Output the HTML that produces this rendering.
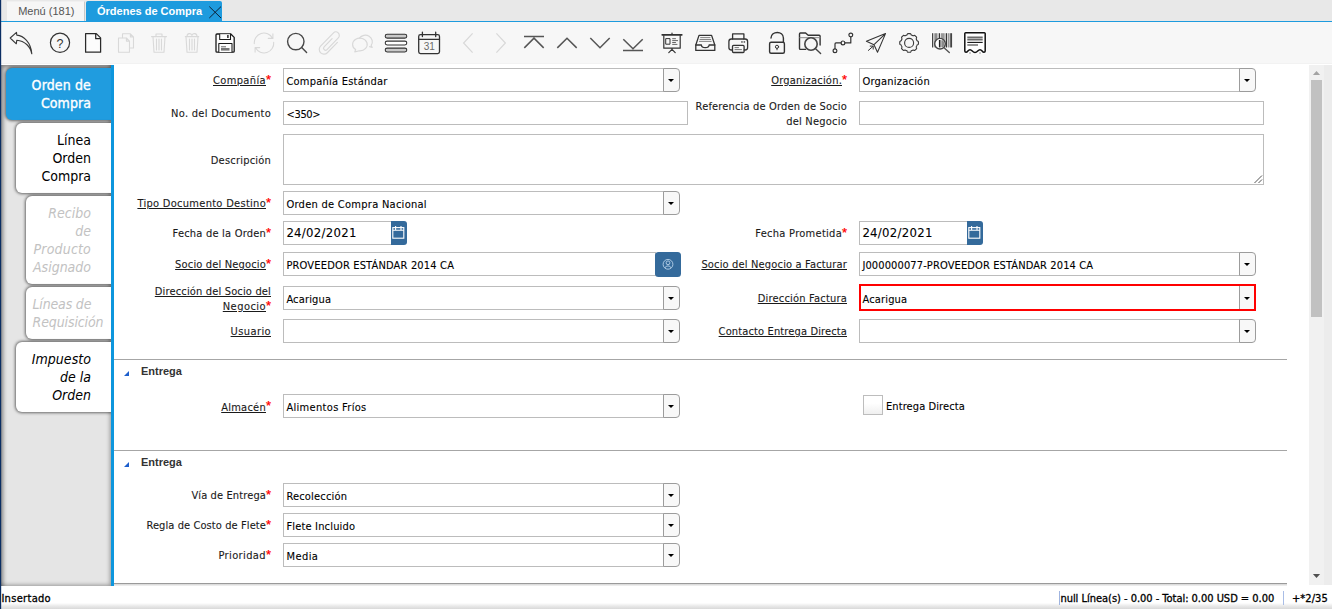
<!DOCTYPE html>
<html lang="es"><head><meta charset="utf-8"><title>Órdenes de Compra</title>
<style>
html,body{margin:0;padding:0}
body{width:1332px;height:609px;overflow:hidden;position:relative;background:#fff;font-family:"DejaVu Sans Condensed","Liberation Sans",sans-serif;font-size:11px;color:#000;-webkit-text-stroke:.1px currentColor}
div,span,i{box-sizing:border-box}
.abs,.lb,.inp,.cbtn,.dbtn,.tab,.hl{position:absolute}
#topbar{position:absolute;left:0;top:0;width:1332px;height:21px;background:#e8e8e8}
#topline{position:absolute;left:1px;top:21px;width:1331px;height:1px;background:#1e9bde}
#navy{position:absolute;left:0;top:0;width:1px;height:609px;background:#0b2e63;z-index:9}
#navy2{position:absolute;left:1px;top:0;width:1px;height:609px;background:rgba(11,46,99,.18);z-index:9}
#tab1{position:absolute;left:7px;top:1px;width:78px;height:20px;background:#f6f6f6;border-right:1px solid #c9c9c9;border-top:1px solid #f0f0f0;font:11px "Liberation Sans",sans-serif;color:#555;line-height:19px;padding-left:11.2px;white-space:nowrap}
#tab2{position:absolute;left:86px;top:1px;width:136px;height:20px;background:#1e9bde;border-radius:2px 2px 0 0;font:bold 11px "Liberation Sans",sans-serif;color:#fff;line-height:20px;padding-left:11px;white-space:nowrap}
#toolbar{position:absolute;left:0;top:22px;width:1332px;height:42px;background:#f7f7f7;border-bottom:1px solid #f2f2f2}
#icons{position:absolute;left:0;top:0;z-index:5}
#side{position:absolute;left:1px;top:65px;width:110px;height:521px;background:#e5e5e5;box-shadow:inset 4px 4px 4px -2px rgba(0,0,0,.45),inset -3px -3px 4px -2px rgba(0,0,0,.35);overflow:hidden}
#bluebar{position:absolute;left:111px;top:65px;width:3px;height:521px;background:#0d96dd}
.tab{right:0;background:#fff;border-radius:6px 0 0 6px;box-shadow:0 0 3px 1px rgba(0,0,0,.55);font-size:14px;line-height:18px;text-align:right;padding:8px 20px 8px 0;white-space:nowrap;color:#000;-webkit-text-stroke:0}
.tab.sel{background:#209cdf;color:#fff;-webkit-text-stroke:.35px #fff}
.tab.dis{color:#c2c2c2;font-style:italic}
.tab.la{text-align:left;padding-left:6.5px}
.tab.it{font-style:italic}
.lb{line-height:15px;text-align:right;white-space:nowrap;color:#1a1a1a}
.u{text-decoration:underline;text-underline-offset:0.9px;text-decoration-thickness:1px}
.ast{color:#f00;font-weight:normal;-webkit-text-stroke:.25px #f00;font-family:"Liberation Sans",sans-serif;font-size:13px;line-height:0;position:relative;top:-0.5px;display:inline-block;width:5px;text-align:center;text-decoration:none}
.inp{height:24px;border:1px solid #bcbcbc;background:#fff;line-height:22px;padding:2px 0 0 2.4px;white-space:nowrap;overflow:hidden}
.inp.date{font-size:13px;padding-top:0}
.inp.red{border:2px solid #f00;border-right:none;line-height:23px;padding:2px 0 0 1.4px}
.cbtn{width:17px;height:24px;border:1px solid #9c9c9c;border-radius:0 4px 4px 0;background:#f8f8f8}
.cbtn.redb{border:2px solid #f00;border-left:none;border-radius:0;box-shadow:inset 1px 0 0 #9c9c9c}
.cbtn i{position:absolute;left:3.7px;top:10px;width:0;height:0;border-left:3.3px solid transparent;border-right:3.3px solid transparent;border-top:3.4px solid #000}
.cbtn.redb i{top:11px;left:4.7px}
.dbtn{width:16px;height:24px;background:#346a9b;border-radius:0 3px 3px 0}
.hl{left:114px;width:1173px;height:1px;background:#a6a6a6}
.sec,#tab1,#tab2{-webkit-text-stroke:0}
.sec{position:absolute;left:141px;font:bold 11px "Liberation Sans",sans-serif;color:#333;line-height:14px;white-space:nowrap}
.tri{position:absolute;left:124px;width:0;height:0;border-left:5.5px solid transparent;border-bottom:5.5px solid #1d5fcc}
#status{position:absolute;left:1px;top:586px;width:1331px;height:23px;background:linear-gradient(#fff 0,#fff 17px,#e9e9e9 20px,#d9d9d9 23px);font-size:11px;-webkit-text-stroke:.3px #000;white-space:nowrap}
#status span{position:absolute;top:2.5px;line-height:15px}
#sb{position:absolute;left:1309px;top:65px;width:15px;height:520px;background:#f1f1f1}
#sb2{position:absolute;left:1324px;top:65px;width:8px;height:520px;background:#ececec}
#thumb{position:absolute;left:1311px;top:80px;width:11px;height:237px;background:#c1c1c1}
</style></head><body>
<div id="navy"></div><div id="navy2"></div>
<div id="topbar"></div>
<div id="tab1">Menú (181)</div>
<div id="tab2">Órdenes de Compra</div>
<div id="topline"></div>
<div id="toolbar"></div>

<svg id="icons" width="1332" height="64" viewBox="0 0 1332 64" fill="none" stroke-linecap="round" stroke-linejoin="round" font-family="Liberation Sans, sans-serif">
<path d="M209.3 6.6L221 18M221 6.6L209.3 18" stroke="#0c2238" stroke-width="1" stroke-linecap="butt"/>
<path d="M10.2 38L16.5 32.4L16.8 35.1C23.5 35.7 31 42.3 31.8 53.8C30.5 46.5 24.7 40.8 16.8 40.2L16.3 43.8Z" stroke="#383838" stroke-width="1.1"/>
<circle cx="60" cy="42.8" r="9.6" stroke="#333" stroke-width="1.2"/><text x="60" y="47.7" font-size="12.5" text-anchor="middle" fill="#333" stroke="none">?</text>
<path d="M85.6 33.6H96.3L100.6 37.9V52.2H85.6ZM95.7 33.8V38.7H100.4" stroke="#2a2a2a" stroke-width="1.25" fill="#fcfcfc"/>
<g stroke="#d9d9d9" stroke-width="1.1"><path d="M122.5 37.6V33.8H130.4L133.5 36.9V48H130M130.4 33.8V36.9H133.5"/><path d="M118.5 38H126.4L129.5 41.1V52.2H118.5ZM126.4 38V41.1H129.5"/></g>
<g stroke="#d9d9d9" stroke-width="1.1"><path d="M151.5 36.6H166.5M156 36.4V34H162V36.4M153 36.8L154 52.2H164L165 36.8M156.5 39V50M159 39V50M161.5 39V50"/></g>
<g stroke="#d9d9d9" stroke-width="1.1"><path d="M185.3 36.6H198.7M187 36.4C187 33 191 32.8 191.9 35.4C192.9 32.8 197 33 197 36.4M186 36.8L187 52.2H197L198 36.8M189.5 39V50M192 39V50M194.5 39V50"/></g>
<g stroke="#1a1a1a" stroke-width="1.3" fill="#fdfdfd"><path d="M217 34H230.8L234.2 37.4V51.2Q234.2 52.2 233.2 52.2H217Q216 52.2 216 51.2V35Q216 34 217 34Z"/><path d="M219.7 34.2V39.4H230.5V34.2" stroke-width="1.05"/><path d="M218.8 52V43.5H232V52" stroke-width="1.05"/></g><rect x="227.2" y="35" width="1.4" height="3" fill="#1a1a1a"/><rect x="221" y="46.3" width="5" height="1" fill="#666"/><rect x="221" y="48" width="8.5" height="2.6" fill="#777"/>
<g stroke="#d8d8d8" stroke-width="1.1"><path d="M254.3 43.8A9.7 9.7 0 0 1 272.5 38.2M272.9 33.9V38.4H268.3"/><path d="M273.7 42.2A9.7 9.7 0 0 1 255.5 47.8M255.1 52.1V47.6H259.7"/></g>
<g stroke="#484848" stroke-width="1.4"><circle cx="295.8" cy="41.6" r="8.2"/><path d="M301.7 47.5L306.6 52.5"/></g>
<g stroke="#d8d8d8" stroke-width="1.15" transform="translate(330.2 43) rotate(44)"><path d="M4.7 -5.5V9A4.7 4.7 0 0 1 -4.7 9V-9.3A3.5 3.5 0 0 1 2.3 -9.3V7A2 2 0 0 1 -1.7 7V-4.5"/></g>
<g stroke="#d8d8d8" stroke-width="1.15"><path d="M359.4 38.2A6.9 6.5 0 1 1 371.2 45.4L372.2 47.4L369.6 46.6"/><path d="M355.6 49.6A7.3 6.3 0 1 1 359.5 50.8L354.8 51.9Z"/></g>
<g stroke="#333" stroke-width="1.05"><rect x="385.2" y="34.2" width="21.6" height="3.9" rx="1.95" fill="#c9c9c9"/><rect x="385.2" y="41.1" width="21.6" height="3.9" rx="1.95" fill="#fff"/><rect x="385.2" y="48.1" width="21.6" height="3.9" rx="1.95" fill="#c9c9c9"/></g>
<g stroke="#333" stroke-width="1.3"><rect x="418.7" y="34.6" width="20.8" height="19" rx="1.8"/><path d="M418.7 39.3H439.5M422.4 32.2V36.6M435.7 32.2V36.6"/></g><text x="429.2" y="50.4" font-size="10" text-anchor="middle" fill="#6a6a6a" stroke="none">31</text>
<g stroke="#d8d8d8" stroke-width="1.2" stroke-linecap="butt" stroke-linejoin="miter"><path d="M472.6 33.3L463.6 43L472.6 52.7"/><path d="M496.4 33.3L505.4 43L496.4 52.7"/></g>
<g stroke="#555" stroke-width="1.5" stroke-linecap="butt" stroke-linejoin="miter"><path d="M524 36.4H544M524.3 47.9L534 38.1L543.7 47.9"/><path d="M557.3 47.9L567 38.2L576.7 47.9"/><path d="M590.3 38L600 47.7L609.7 38"/><path d="M623.3 39.2L633 48.8L642.7 39.2M623 50.4H643"/></g>
<g stroke="#333"><path d="M662.2 34.8H681.8" stroke-width="1.7"/><path d="M672 33V34M663.8 35.5V48.2H680.2V35.5M672 48.2V49.4L668.8 52.6M672 49.4L675.2 52.6" stroke-width="1.2"/><rect x="666.1" y="38.6" width="3.9" height="5.6" stroke-width="1"/><path d="M672.6 38.7H675.5M672.6 40.6H677.6M672.6 42.5H675.5M672.6 44.4H677" stroke="#555" stroke-width=".9"/></g>
<g stroke="#333" stroke-width="1.3"><path d="M695.8 45L699 35.4H711.6L714.8 45V50.4H695.8Z"/><path d="M695.8 45H701.4C701.6 48.6 708.9 48.6 709.1 45H714.8"/><path d="M700.6 37.6H710M700 39.5H710.7M699.4 41.4H711.2" stroke="#777" stroke-width=".9"/></g>
<g stroke="#333" stroke-width="1.3"><path d="M732.6 39V33.9H743.9V39"/><path d="M732.4 50H731.4Q728.9 50 728.9 47.5V41.5Q728.9 39 731.4 39H745.1Q747.6 39 747.6 41.5V47.5Q747.6 50 745.1 50H744.2"/><rect x="732.5" y="45.4" width="11.6" height="7.1" rx="1"/><path d="M735 47.6H738.5M735 49.6H741.5" stroke="#777" stroke-width="1"/></g><rect x="741.2" y="41.3" width="1.5" height="1.3" fill="#333"/><rect x="743.6" y="41.3" width="1.5" height="1.3" fill="#333"/>
<g stroke="#333" stroke-width="1.4"><rect x="769.6" y="42.3" width="14.8" height="11" rx="1.5"/><path d="M771 38C771.3 30.6 783.3 30.6 783.4 38V42.3"/><circle cx="777" cy="46.8" r="1.6" stroke-width="1"/><path d="M777 48.4V49.8" stroke-width="1"/></g>
<g stroke="#333" stroke-width="1.4"><path d="M805.5 49.4H800.4Q799.5 49.4 799.5 48.5V33.9Q799.5 33 800.4 33H805.6L808.2 35.3H819.2Q820.1 35.3 820.1 36.2V45"/><path d="M799.8 37.7H820" stroke="#888" stroke-width="1"/><circle cx="811" cy="44" r="6.2" stroke="#444" stroke-width="1.6" fill="#f7f7f7"/><path d="M815.6 48.7L820.6 53.4" stroke="#444"/></g>
<g stroke="#333" stroke-width="1.2"><circle cx="835" cy="50.8" r="1.9"/><circle cx="843" cy="42.9" r="1.9"/><circle cx="850.8" cy="35" r="1.9"/><path d="M835 48.8V43.9Q835 42.9 836 42.9H841M845 42.9H850.8V37"/></g>
<g stroke="#333" stroke-width="1.05"><path d="M885.5 33.6L866.4 41.3L874 44.7ZM885.5 33.6L874 44.7L877.5 52.2Z"/><path d="M868.4 50.4L873 46.3M870.2 46.1H873.2V49.1" stroke-width="1"/></g>
<g stroke="#3c3c3c" stroke-width="1.15"><path d="M918.45 42.90 L918.45 43.19 L918.43 43.49 L918.41 43.78 L918.38 44.07 L918.29 44.36 L917.92 44.58 L917.54 44.79 L917.18 44.97 L916.93 45.17 L916.85 45.42 L916.77 45.66 L916.68 45.90 L916.58 46.14 L916.47 46.37 L916.36 46.60 L916.24 46.83 L916.28 47.14 L916.41 47.54 L916.53 47.95 L916.63 48.37 L916.49 48.63 L916.30 48.86 L916.11 49.08 L915.92 49.30 L915.71 49.51 L915.50 49.72 L915.28 49.91 L915.06 50.10 L914.83 50.29 L914.57 50.43 L914.15 50.33 L913.74 50.21 L913.34 50.08 L913.03 50.04 L912.80 50.16 L912.57 50.27 L912.34 50.38 L912.10 50.48 L911.86 50.57 L911.62 50.65 L911.37 50.73 L911.17 50.98 L910.99 51.34 L910.78 51.72 L910.56 52.09 L910.27 52.18 L909.98 52.21 L909.69 52.23 L909.39 52.25 L909.10 52.25 L908.81 52.25 L908.51 52.23 L908.22 52.21 L907.93 52.18 L907.64 52.09 L907.42 51.72 L907.21 51.34 L907.03 50.98 L906.83 50.73 L906.58 50.65 L906.34 50.57 L906.10 50.48 L905.86 50.38 L905.63 50.27 L905.40 50.16 L905.17 50.04 L904.86 50.08 L904.46 50.21 L904.05 50.33 L903.63 50.43 L903.37 50.29 L903.14 50.10 L902.92 49.91 L902.70 49.72 L902.49 49.51 L902.28 49.30 L902.09 49.08 L901.90 48.86 L901.71 48.63 L901.57 48.37 L901.67 47.95 L901.79 47.54 L901.92 47.14 L901.96 46.83 L901.84 46.60 L901.73 46.37 L901.62 46.14 L901.52 45.90 L901.43 45.66 L901.35 45.42 L901.27 45.17 L901.02 44.97 L900.66 44.79 L900.28 44.58 L899.91 44.36 L899.82 44.07 L899.79 43.78 L899.77 43.49 L899.75 43.19 L899.75 42.90 L899.75 42.61 L899.77 42.31 L899.79 42.02 L899.82 41.73 L899.91 41.44 L900.28 41.22 L900.66 41.01 L901.02 40.83 L901.27 40.63 L901.35 40.38 L901.43 40.14 L901.52 39.90 L901.62 39.66 L901.73 39.43 L901.84 39.20 L901.96 38.97 L901.92 38.66 L901.79 38.26 L901.67 37.85 L901.57 37.43 L901.71 37.17 L901.90 36.94 L902.09 36.72 L902.28 36.50 L902.49 36.29 L902.70 36.08 L902.92 35.89 L903.14 35.70 L903.37 35.51 L903.63 35.37 L904.05 35.47 L904.46 35.59 L904.86 35.72 L905.17 35.76 L905.40 35.64 L905.63 35.53 L905.86 35.42 L906.10 35.32 L906.34 35.23 L906.58 35.15 L906.83 35.07 L907.03 34.82 L907.21 34.46 L907.42 34.08 L907.64 33.71 L907.93 33.62 L908.22 33.59 L908.51 33.57 L908.81 33.55 L909.10 33.55 L909.39 33.55 L909.69 33.57 L909.98 33.59 L910.27 33.62 L910.56 33.71 L910.78 34.08 L910.99 34.46 L911.17 34.82 L911.37 35.07 L911.62 35.15 L911.86 35.23 L912.10 35.32 L912.34 35.42 L912.57 35.53 L912.80 35.64 L913.03 35.76 L913.34 35.72 L913.74 35.59 L914.15 35.47 L914.57 35.37 L914.83 35.51 L915.06 35.70 L915.28 35.89 L915.50 36.08 L915.71 36.29 L915.92 36.50 L916.11 36.72 L916.30 36.94 L916.49 37.17 L916.63 37.43 L916.53 37.85 L916.41 38.26 L916.28 38.66 L916.24 38.97 L916.36 39.20 L916.47 39.43 L916.58 39.66 L916.68 39.90 L916.77 40.14 L916.85 40.38 L916.93 40.63 L917.18 40.83 L917.54 41.01 L917.92 41.22 L918.29 41.44 L918.38 41.73 L918.41 42.02 L918.43 42.31 L918.45 42.61Z"/><circle cx="909.1" cy="42.9" r="4.5"/></g>
<rect x="931.4" y="32.6" width="21.2" height="15.6" fill="#fff" stroke="none"/>
<rect x="932.0" y="33.2" width="1.3" height="14.3" fill="#444" stroke="none"/>
<rect x="934.3" y="33.2" width="3.2" height="14.3" fill="#8a8a8a" stroke="none"/>
<rect x="938.7" y="33.2" width="1.3" height="14.3" fill="#333" stroke="none"/>
<rect x="940.7" y="33.2" width="4.0" height="14.3" fill="#999" stroke="none"/>
<rect x="945.7" y="33.2" width="1.3" height="14.3" fill="#333" stroke="none"/>
<rect x="947.6" y="33.2" width="2.0" height="14.3" fill="#999" stroke="none"/>
<rect x="950.2" y="33.2" width="1.9" height="14.3" fill="#444" stroke="none"/>
<circle cx="940" cy="43.7" r="5.3" fill="#fff" stroke="#444" stroke-width="1.4"/><rect x="938.9" y="40" width="1.6" height="7.4" fill="#222" stroke="none"/><path d="M941.3 40.2H943.2Q944.2 41.8 944.2 43.7Q944.2 45.6 943.2 47.2H941.3Z" fill="#8a8a8a" stroke="none"/><path d="M944 47.8L949.3 52.6" stroke="#555" stroke-width="1.4"/>
<rect x="963.6" y="31.2" width="22.8" height="22.4" fill="#fff" stroke="none"/><path d="M964.8 33.6Q964.8 32.7 965.7 32.7H984.3Q985.2 32.7 985.2 33.6V51Q985.2 52.2 984 52.2C982 52.2 982.2 49.7 980 49.7C977.8 49.7 977.6 52.5 975 52.5C972.4 52.5 972.2 49.7 970 49.7C967.8 49.7 968 52.2 966 52.2Q964.8 52.2 964.8 51Z" fill="#fff" stroke="#111" stroke-width="1.5"/><path d="M967.3 37.3H982.7M967.3 39.7H982.7" stroke="#6a6a6a" stroke-width="1.7" stroke-linecap="butt"/><path d="M967.3 42.4H982.7" stroke="#111" stroke-width="1.1" stroke-linecap="butt"/><path d="M967.3 45H978" stroke="#666" stroke-width="1.4" stroke-linecap="butt"/><circle cx="970" cy="53" r=".8" fill="#888" stroke="none"/><circle cx="980" cy="53" r=".8" fill="#888" stroke="none"/>
</svg>
<div id="side">
<div class="tab sel" style="top:3px;width:105px;height:52px"><span id="t1" style="letter-spacing:0.134px;">Orden de</span><br><span id="t2" style="letter-spacing:0.055px;">Compra</span></div>
<div class="tab " style="top:58px;width:95px;height:70px"><span id="t3">Línea</span><br><span id="t4">Orden</span><br><span id="t5" style="letter-spacing:-0.029px;">Compra</span></div>
<div class="tab dis" style="top:131px;width:85px;height:88px"><span id="t6">Recibo</span><br><span id="t7">de</span><br><span id="t8" style="letter-spacing:0.184px;">Producto</span><br><span id="t9" style="letter-spacing:-0.010px;">Asignado</span></div>
<div class="tab dis la" style="top:222px;width:85px;height:52px"><span id="t10" style="letter-spacing:-0.165px;">Líneas de</span><br><span id="t11" style="letter-spacing:-0.107px;">Requisición</span></div>
<div class="tab it" style="top:277px;width:95px;height:70px"><span id="t12" style="letter-spacing:0.047px;">Impuesto</span><br><span id="t13">de la</span><br><span id="t14">Orden</span></div>
</div><div id="bluebar"></div>
<div class="lb" style="top:73.2px;right:1061px"><span id="t15" class="u" style="letter-spacing:0.369px;">Compañía</span><span class="ast">*</span></div>
<div class="inp" style="left:283px;top:68px;width:381px"><span id="t16" style="letter-spacing:0.233px;">Compañía Estándar</span></div>
<div class="cbtn" style="left:663px;top:68px"><i></i></div>
<div class="lb" style="top:106.2px;right:1061px"><span id="t17" style="letter-spacing:0.280px;">No. del Documento</span></div>
<div class="inp " style="left:283px;top:101px;width:405px;height:24px"><span id="t18" style="letter-spacing:-0.300px;">&lt;350&gt;</span></div>
<div class="lb" style="top:153.0px;right:1061px"><span id="t19" style="letter-spacing:0.206px;">Descripción</span></div>
<div class="inp ta" style="left:283px;top:134px;width:981px;height:51px"></div>
<svg class="abs" style="left:1253px;top:174px" width="10" height="10"><path d="M1.5 9L9 1.5M5.5 9L9 5.5" stroke="#555" stroke-width="1"/></svg>
<div class="lb" style="top:196.2px;right:1061px"><span id="t20" class="u" style="letter-spacing:0.289px;">Tipo Documento Destino</span><span class="ast">*</span></div>
<div class="inp" style="left:283px;top:191px;width:381px"><span id="t21" style="letter-spacing:0.273px;">Orden de Compra Nacional</span></div>
<div class="cbtn" style="left:663px;top:191px"><i></i></div>
<div class="lb" style="top:226.0px;right:1061px"><span id="t22" style="letter-spacing:0.206px;">Fecha de la Orden</span><span class="ast">*</span></div>
<div class="inp date" style="left:283px;top:221px;width:109px"><span id="t23" style="letter-spacing:0.289px;">24/02/2021</span></div><div class="dbtn" style="left:391px;top:221px"><svg width="16" height="24" viewBox="0 0 16 24"><g fill="none" stroke="#fff" stroke-width="1.1"><rect x="1.8" y="6.6" width="11" height="10.6"/><path d="M1.8 9.3H12.8M4.6 5V8.8M10 5V8.8"/></g></svg></div>
<div class="lb" style="top:257.0px;right:1061px"><span id="t24" class="u" style="letter-spacing:0.166px;">Socio del Negocio</span><span class="ast">*</span></div>
<div class="inp " style="left:283px;top:252px;width:373px;height:24px"><span id="t25" style="letter-spacing:0.171px;">PROVEEDOR ESTÁNDAR 2014 CA</span></div>
<div class="abs" style="left:655px;top:252px;width:26px;height:25px;background:#346a9b;border-radius:3.5px"><svg width="26" height="25" viewBox="0 0 26 25" fill="none" stroke="#b9d3ea" stroke-width=".9"><circle cx="13" cy="12.3" r="4.9"/><circle cx="13" cy="10.8" r="1.9"/><path d="M9.9 16C10.4 13.3 15.6 13.3 16.1 16"/></svg></div>
<div class="lb" style="top:284.1px;right:1061px"><span id="t26" class="u" style="letter-spacing:0.160px;">Dirección del Socio del</span></div>
<div class="lb" style="top:299.0px;right:1061px"><span id="t27" class="u" style="letter-spacing:0.450px;">Negocio</span><span class="ast">*</span></div>
<div class="inp" style="left:283px;top:286px;width:381px"><span id="t28" style="letter-spacing:0.159px;">Acarigua</span></div>
<div class="cbtn" style="left:663px;top:286px"><i></i></div>
<div class="lb" style="top:324.1px;right:1061px"><span id="t29" class="u" style="letter-spacing:0.399px;">Usuario</span></div>
<div class="inp" style="left:283px;top:319px;width:381px"></div>
<div class="cbtn" style="left:663px;top:319px"><i></i></div>
<div class="lb" style="top:73.2px;right:485px"><span id="t30" class="u" style="letter-spacing:0.219px;">Organización.</span><span class="ast">*</span></div>
<div class="inp" style="left:859px;top:68px;width:381px"><span id="t31" style="letter-spacing:0.224px;">Organización</span></div>
<div class="cbtn" style="left:1239px;top:68px"><i></i></div>
<div class="lb" style="top:98.8px;right:485px"><span id="t32" style="letter-spacing:0.168px;">Referencia de Orden de Socio</span></div>
<div class="lb" style="top:114.0px;right:485px"><span id="t33" style="letter-spacing:0.223px;">del Negocio</span></div>
<div class="inp " style="left:859px;top:101px;width:405px;height:24px"></div>
<div class="lb" style="top:226.0px;right:485px"><span id="t34" style="letter-spacing:0.282px;">Fecha Prometida</span><span class="ast">*</span></div>
<div class="inp date" style="left:859px;top:221px;width:109px"><span id="t35" style="letter-spacing:0.289px;">24/02/2021</span></div><div class="dbtn" style="left:967px;top:221px"><svg width="16" height="24" viewBox="0 0 16 24"><g fill="none" stroke="#fff" stroke-width="1.1"><rect x="1.8" y="6.6" width="11" height="10.6"/><path d="M1.8 9.3H12.8M4.6 5V8.8M10 5V8.8"/></g></svg></div>
<div class="lb" style="top:257.0px;right:485px"><span id="t36" class="u" style="letter-spacing:0.166px;">Socio del Negocio a Facturar</span></div>
<div class="inp" style="left:859px;top:252px;width:381px"><span id="t37" style="letter-spacing:0.119px;">J000000077-PROVEEDOR ESTÁNDAR 2014 CA</span></div>
<div class="cbtn" style="left:1239px;top:252px"><i></i></div>
<div class="lb" style="top:291.0px;right:485px"><span id="t38" class="u" style="letter-spacing:0.202px;">Dirección Factura</span></div>
<div class="inp red" style="left:859px;top:284px;width:381px;height:27px"><span id="t39" style="letter-spacing:0.171px;">Acarigua</span></div>
<div class="cbtn redb" style="left:1239px;top:284px;height:27px"><i></i></div>
<div class="lb" style="top:324.1px;right:485px"><span id="t40" class="u" style="letter-spacing:0.134px;">Contacto Entrega Directa</span></div>
<div class="inp" style="left:859px;top:319px;width:381px"></div>
<div class="cbtn" style="left:1239px;top:319px"><i></i></div>
<div class="hl" style="top:359px"></div>
<div class="tri" style="top:371px"></div><div class="sec" style="top:363.5px">Entrega</div>
<div class="lb" style="top:399.8px;right:1061px"><span id="t41" class="u" style="letter-spacing:0.253px;">Almacén</span><span class="ast">*</span></div>
<div class="inp" style="left:283px;top:394px;width:381px"><span id="t42" style="letter-spacing:0.319px;">Alimentos Fríos</span></div>
<div class="cbtn" style="left:663px;top:394px"><i></i></div>
<div class="abs" style="left:863px;top:395px;width:20px;height:20px;border:1px solid #bdbdbd;background:linear-gradient(#fff 40%,#efefef)"></div>
<div class="abs" style="left:886px;top:398.8px;line-height:15px;white-space:nowrap"><span id="t43" style="letter-spacing:0.088px;">Entrega Directa</span></div>
<div class="hl" style="top:450px"></div>
<div class="tri" style="top:462px"></div><div class="sec" style="top:454.5px">Entrega</div>
<div class="lb" style="top:488.4px;right:1061px"><span id="t44" style="letter-spacing:0.120px;">Vía de Entrega</span><span class="ast">*</span></div>
<div class="inp" style="left:283px;top:483px;width:381px"><span id="t45" style="letter-spacing:0.185px;">Recolección</span></div>
<div class="cbtn" style="left:663px;top:483px"><i></i></div>
<div class="lb" style="top:518.4px;right:1061px"><span id="t46" style="letter-spacing:0.093px;">Regla de Costo de Flete</span><span class="ast">*</span></div>
<div class="inp" style="left:283px;top:513px;width:381px"><span id="t47" style="letter-spacing:0.172px;">Flete Incluido</span></div>
<div class="cbtn" style="left:663px;top:513px"><i></i></div>
<div class="lb" style="top:548.4px;right:1061px"><span id="t48" style="letter-spacing:0.390px;">Prioridad</span><span class="ast">*</span></div>
<div class="inp" style="left:283px;top:543px;width:381px"><span id="t49" style="letter-spacing:0.450px;">Media</span></div>
<div class="cbtn" style="left:663px;top:543px"><i></i></div>
<div class="abs" style="left:114px;top:583px;width:1173px;height:3px;background:linear-gradient(#9a9a9a 0,#9a9a9a 1px,#d5d5d5 1px,#f4f4f4 3px)"></div>
<div id="sb"></div><div id="sb2"></div><div id="thumb"></div>
<svg class="abs" style="left:1309px;top:65px" width="15" height="520"><path d="M3.9 10H11.1L7.5 5.9Z" fill="#a3a3a3"/><path d="M3.9 509H11.1L7.5 513.1Z" fill="#505050"/></svg>
<div id="status">
<span style="left:0.4px"><span id="t50" style="letter-spacing:0.311px;">Insertado</span></span>
<span style="left:1059.4px"><span id="t51" style="letter-spacing:-0.023px;">null Línea(s) - 0.00 - Total: 0.00 USD = 0.00</span></span>
<span style="left:1291px"><span id="t52" style="letter-spacing:0.055px;">+*2/35</span></span>
<i class="abs" style="left:1058px;top:5px;width:1px;height:14px;background:#9fb4e0"></i><i class="abs" style="left:1282px;top:5px;width:1px;height:14px;background:#a9bde6"></i>
</div>
</body></html>
